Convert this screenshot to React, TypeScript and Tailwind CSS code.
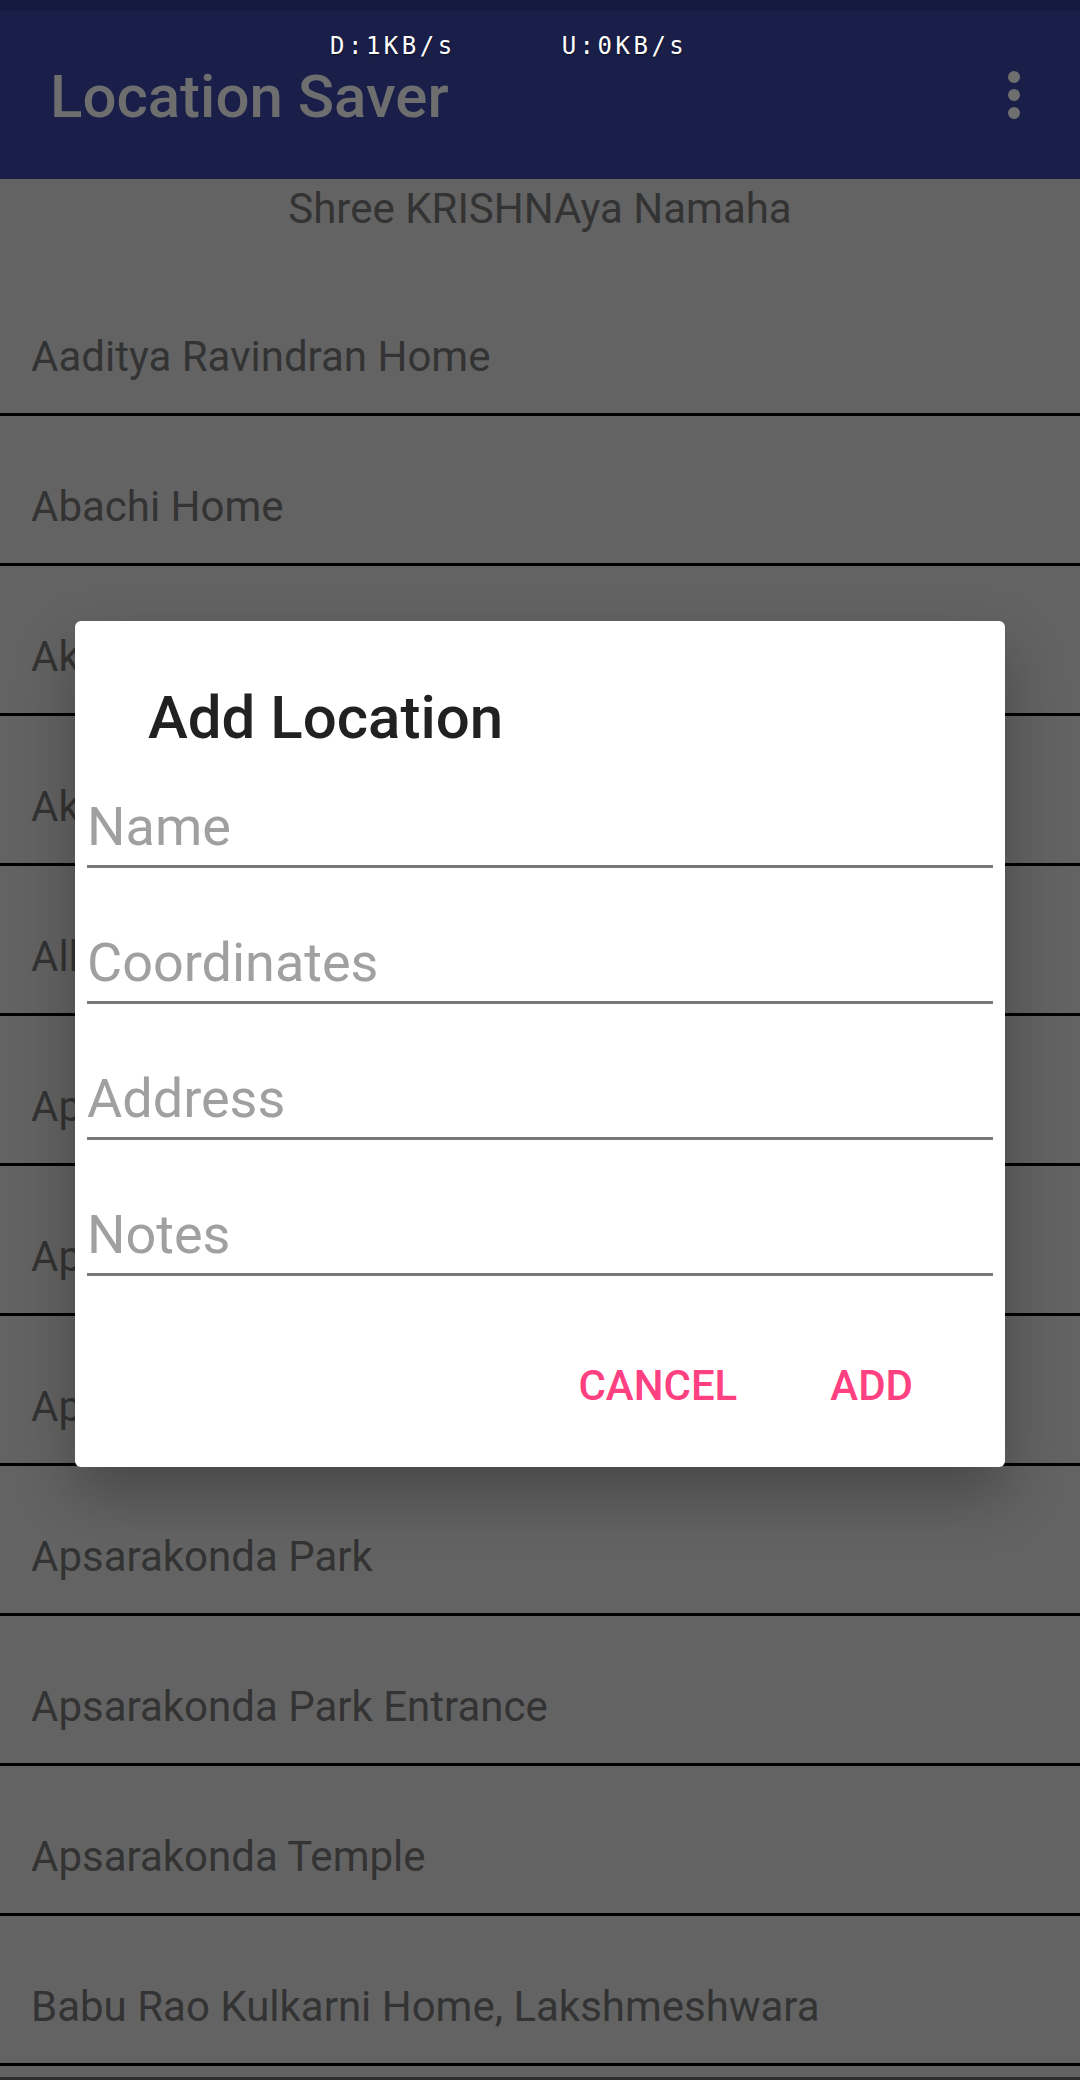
const places = [
  "Aaditya Ravindran Home",
  "Abachi Home",
  "Akshay Home",
  "Akka Mahadevi Temple",
  "Allama Prabhu Temple",
  "Apollo Hospital",
  "Apsara Theatre",
  "Apsarakonda Beach",
  "Apsarakonda Park",
  "Apsarakonda Park Entrance",
  "Apsarakonda Temple",
  "Babu Rao Kulkarni Home, Lakshmeshwara",
];

const fields = ["Name", "Coordinates", "Address", "Notes"];

function MenuDots() {
  return (
    <div className="mt-[9px] flex flex-col gap-[6px]">
      <span className="h-[12px] w-[12px] rounded-full bg-[#6f6f6f]" />
      <span className="h-[12px] w-[12px] rounded-full bg-[#6f6f6f]" />
      <span className="h-[12px] w-[12px] rounded-full bg-[#6f6f6f]" />
    </div>
  );
}

function AddLocationDialog() {
  return (
    <div className="absolute left-[75px] top-[621px] flex h-[846px] w-[930px] flex-col rounded-[6px] bg-white shadow-[0_28px_60px_rgba(0,0,0,0.28)]">
      <h2 className="pl-[73px] pt-[62px] text-[60px] font-medium leading-[70px] text-[#212121]">
        Add Location
      </h2>

      <div className="mt-[43px] flex flex-col gap-[64px] px-[12px]">
        {fields.map((f) => (
          <div key={f} className="border-b-[3px] border-[#787878] pb-[8px]">
            <span className="block text-[54px] leading-[61px] text-[#a0a0a0]">{f}</span>
          </div>
        ))}
      </div>

      <div className="mt-[85px] flex justify-end gap-[93px] pr-[92px]">
        <button type="button" className="text-[42px] font-medium leading-[49px] text-[#ff4081]">
          CANCEL
        </button>
        <button type="button" className="text-[42px] font-medium leading-[49px] text-[#ff4081]">
          ADD
        </button>
      </div>
    </div>
  );
}

export default function App() {
  return (
    <div className="relative h-[2080px] w-[1080px] overflow-hidden bg-[#636363] font-['Roboto',sans-serif]">
      {/* app bar */}
      <header className="bg-[#1a1f4a]">
        <div className="h-[11px] bg-[#141a40]" />
        <div className="flex h-[168px] items-start justify-between pl-[50px] pr-[60px] pt-[51px]">
          <h1 className="text-[60px] font-medium leading-[70px] text-[#6e6e6e]">Location Saver</h1>
          <MenuDots />
        </div>
      </header>

      {/* network speed overlay */}
      <div className="absolute left-[330px] top-[32px] flex gap-[106px] font-['DejaVu_Sans_Mono',monospace] text-[24px] leading-[28px] tracking-[3.5px] text-white [text-shadow:0_1px_2px_rgba(0,0,0,0.6)]">
        <span>D:1KB/s</span>
        <span>U:0KB/s</span>
      </div>

      <p className="h-[87px] pt-[5px] text-center text-[42px] leading-[49px] text-[#333333]">
        Shree KRISHNAya Namaha
      </p>

      <ul>
        {places.map((p) => (
          <li
            key={p}
            className="h-[150px] border-b-[3px] border-black pl-[31px] pt-[66px] text-[42px] leading-[49px] text-[#333333] whitespace-nowrap"
          >
            {p}
          </li>
        ))}
        <li className="h-[14px] border-b-[3px] border-[#2e2e2e]" />
      </ul>

      <AddLocationDialog />
    </div>
  );
}
